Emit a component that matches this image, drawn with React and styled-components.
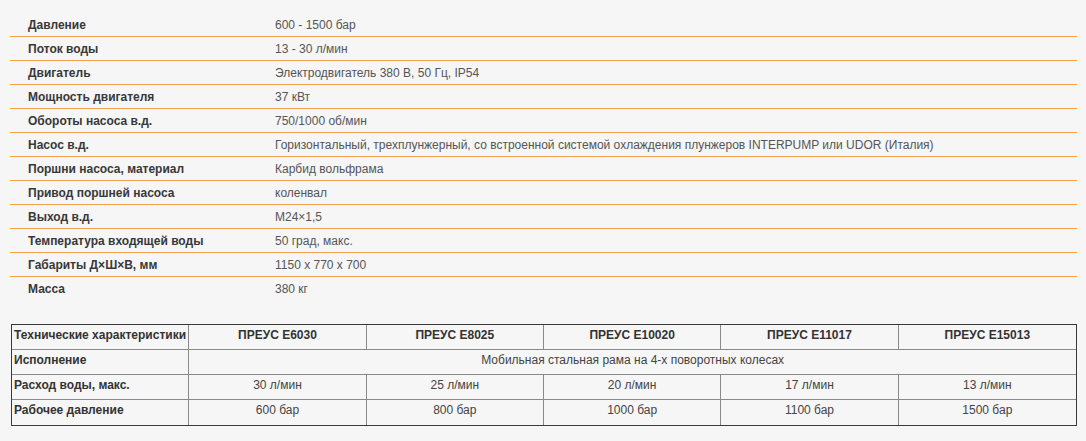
import React from "react";
import styled, { createGlobalStyle } from "styled-components";

const specs = [
  ["Давление", "600 - 1500 бар"],
  ["Поток воды", "13 - 30 л/мин"],
  ["Двигатель", "Электродвигатель 380 В, 50 Гц, IP54"],
  ["Мощность двигателя", "37 кВт"],
  ["Обороты насоса в.д.", "750/1000 об/мин"],
  ["Насос в.д.", "Горизонтальный, трехплунжерный, со встроенной системой охлаждения плунжеров INTERPUMP или UDOR (Италия)"],
  ["Поршни насоса, материал", "Карбид вольфрама"],
  ["Привод поршней насоса", "коленвал"],
  ["Выход в.д.", "М24×1,5"],
  ["Температура входящей воды", "50 град, макс."],
  ["Габариты Д×Ш×В, мм", "1150 x 770 x 700"],
  ["Масса", "380 кг"]
];

const models = ["ПРЕУС E6030", "ПРЕУС E8025", "ПРЕУС E10020", "ПРЕУС E11017", "ПРЕУС E15013"];
const flow = ["30 л/мин", "25 л/мин", "20 л/мин", "17 л/мин", "13 л/мин"];
const pressure = ["600 бар", "800 бар", "1000 бар", "1100 бар", "1500 бар"];

export default function App() {
  return (
    <Page>
      <GlobalStyle />
      <SpecTable>
        <tbody>
          {specs.map(([k, v]) => (
            <SpecRow key={k}>
              <SpecLabel>{k}</SpecLabel>
              <SpecValue>{v}</SpecValue>
            </SpecRow>
          ))}
        </tbody>
      </SpecTable>

      <ModelTable>
        <colgroup>
          {Array.from({ length: 6 }).map((_, i) => (
            <col key={i} />
          ))}
        </colgroup>
        <tbody>
          <tr>
            <Cell $head>Технические характеристики</Cell>
            {models.map((m) => (
              <Cell key={m} $head $center>
                {m}
              </Cell>
            ))}
          </tr>
          <tr>
            <Cell $head>Исполнение</Cell>
            <Cell colSpan={5} $center>
              Мобильная стальная рама на 4-х поворотных колесах
            </Cell>
          </tr>
          <tr>
            <Cell $head>Расход воды, макс.</Cell>
            {flow.map((f) => (
              <Cell key={f} $center>
                {f}
              </Cell>
            ))}
          </tr>
          <tr>
            <Cell $head>Рабочее давление</Cell>
            {pressure.map((p) => (
              <Cell key={p} $center>
                {p}
              </Cell>
            ))}
          </tr>
        </tbody>
      </ModelTable>
    </Page>
  );
}

const GlobalStyle = createGlobalStyle`
  html, body {
    margin: 0;
    background: #f6f6f6;
  }
  body {
    font-family: "Liberation Sans", Arial, sans-serif;
    font-size: 12px;
  }
`;

const Page = styled.div`
  padding: 12px 0 0 10px;
  width: 1067px;
`;

const SpecTable = styled.table`
  width: 1067px;
  border-collapse: collapse;
  table-layout: fixed;
`;

const SpecRow = styled.tr`
  height: 24px;
  border-bottom: 1px solid #f3a445;
  &:last-child {
    border-bottom: none;
  }
`;

const SpecLabel = styled.td`
  width: 247px;
  padding: 2px 0 0 18px;
  font-weight: bold;
  color: #383838;
  vertical-align: middle;
  white-space: nowrap;
`;

const SpecValue = styled.td`
  padding: 2px 0 0;
  color: #555;
  vertical-align: middle;
  white-space: nowrap;
`;

const ModelTable = styled.table`
  margin-top: 24px;
  margin-left: 1px;
  width: 1066px;
  table-layout: fixed;
  border-collapse: separate;
  border-spacing: 0;
  border: 1px solid #3a3a3a;
  tr:last-child td {
    border-bottom: none;
  }
  td:last-child {
    border-right: none;
  }
`;

const Cell = styled.td`
  height: 25px;
  box-sizing: border-box;
  padding: 3px 2px 0;
  vertical-align: top;
  line-height: 14px;
  color: #333;
  font-weight: ${(p) => (p.$head ? "bold" : "normal")};
  text-align: ${(p) => (p.$center ? "center" : "left")};
  border-right: 1px solid #8a8a8a;
  border-bottom: 1px solid #8a8a8a;
  ${(p) => p.$center && !p.$head && "color: #444;"}
`;
